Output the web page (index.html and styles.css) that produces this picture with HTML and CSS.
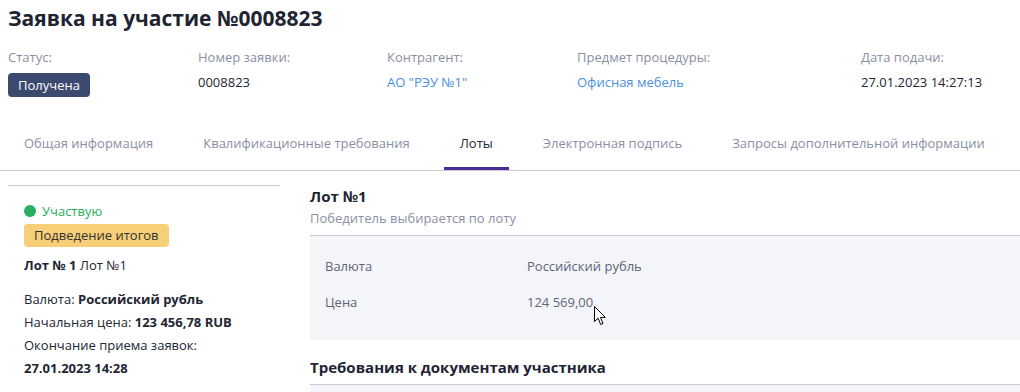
FILE: index.html
```html
<!DOCTYPE html>
<html lang="ru">
<head>
    <meta charset="UTF-8">
    <meta name="viewport" content="width=device-width, initial-scale=1.0">
    <title>Заявка на участие №0008823</title>
    <link rel="stylesheet" href="styles.css">
</head>
<body>

<h1 class="page-title">Заявка на участие №0008823</h1>

<div class="meta">
    <div class="meta-item">
        <div class="meta-label">Статус:</div>
        <div class="meta-value"><span class="status-badge">Получена</span></div>
    </div>
    <div class="meta-item">
        <div class="meta-label">Номер заявки:</div>
        <div class="meta-value">0008823</div>
    </div>
    <div class="meta-item">
        <div class="meta-label">Контрагент:</div>
        <div class="meta-value"><a class="link" href="#">АО "РЭУ №1"</a></div>
    </div>
    <div class="meta-item">
        <div class="meta-label">Предмет процедуры:</div>
        <div class="meta-value"><a class="link" href="#">Офисная мебель</a></div>
    </div>
    <div class="meta-item">
        <div class="meta-label">Дата подачи:</div>
        <div class="meta-value">27.01.2023 14:27:13</div>
    </div>
</div>

<div class="tabs">
    <div class="tab">Общая информация</div>
    <div class="tab">Квалификационные требования</div>
    <div class="tab active">Лоты</div>
    <div class="tab">Электронная подпись</div>
    <div class="tab">Запросы дополнительной информации</div>
</div>

<div class="lots">
    <div class="lot-list">
        <div class="lot-card">
            <div class="participating"><span class="dot"></span>Участвую</div>
            <div class="stage-badge">Подведение итогов</div>
            <div class="lot-name"><b>Лот № 1</b> Лот №1</div>
            <div class="lot-info">Валюта: <b>Российский рубль</b></div>
            <div class="lot-info">Начальная цена: <b>123 456,78 RUB</b></div>
            <div class="lot-info">Окончание приема заявок:</div>
            <div class="lot-info"><b>27.01.2023 14:28</b></div>
        </div>
    </div>

    <div class="lot-detail">
        <h3 class="section-title">Лот №1</h3>
        <div class="section-sub">Победитель выбирается по лоту</div>

        <div class="info-box">
            <div class="info-row">
                <div class="info-label">Валюта</div>
                <div class="info-value">Российский рубль</div>
            </div>
            <div class="info-row">
                <div class="info-label">Цена</div>
                <div class="info-value">124 569,00</div>
            </div>
        </div>

        <h3 class="section-title docs-title">Требования к документам участника</h3>
        <div class="docs-box"></div>
    </div>
</div>

<!-- mouse pointer from the screenshot -->
<svg class="cursor" width="13" height="20" viewBox="0 0 13 20">
    <path d="M0.5 0.5 L0.5 15.5 L4.1 12.2 L6.7 18.5 L9 17.5 L6.5 11.4 L11.3 11.4 Z" fill="#fff" stroke="#000" stroke-width="1" stroke-linejoin="round"/>
</svg>

</body>
</html>
```

FILE: styles.css
```css
body {
    font-family: "Open Sans", "Noto Sans", Arial, sans-serif;
    font-size: 13px;
    color: #222633;
    margin: 0;
    padding: 0 0 0 8px;
    background-color: #fff;
    position: relative;
    overflow: hidden;
}
.page-title {
    font-size: 21px;
    line-height: 28px;
    font-weight: 700;
    margin: 4px 0 0;
    color: #1f2432;
}
.meta {
    display: grid;
    grid-template-columns: 190px 189px 190px 284px 1fr;
    margin-top: 16px;
}
.meta-label {
    color: #8b8fa3;
    line-height: 18px;
}
.meta-value {
    margin-top: 4px;
    height: 24px;
    line-height: 24px;
}
.status-badge {
    display: inline-block;
    vertical-align: -3px;
    background-color: #3d4a6f;
    color: #fff;
    border-radius: 4px;
    padding: 0 10px;
    line-height: 24px;
}
.link {
    color: #4a8fe2;
    text-decoration: none;
}
.tabs {
    display: flex;
    gap: 18px;
    margin: 24px 0 0 -8px;
    padding-left: 8px;
    border-bottom: 1px solid #c8c9d5;
}
.tab {
    padding: 15px 16px 14px;
    line-height: 20px;
    color: #8b8fa3;
    border-bottom: 3px solid transparent;
}
.tab.active {
    color: #222633;
    border-bottom-color: #4a2d96;
}
.lots {
    display: flex;
    gap: 30px;
    margin-top: 14px;
}
.lot-list {
    width: 272px;
    flex-shrink: 0;
    border-top: 1px solid #c8c9d5;
}
.lot-card {
    padding: 15px 16px;
}
.participating {
    display: flex;
    align-items: center;
    gap: 6px;
    color: #27ae60;
    line-height: 20px;
}
.dot {
    width: 12px;
    height: 12px;
    border-radius: 50%;
    background-color: #27ae60;
}
.stage-badge {
    width: fit-content;
    height: 23px;
    margin-top: 3px;
    background-color: #f8cf79;
    color: #333;
    border-radius: 4px;
    padding: 0 10px;
    line-height: 23px;
}
.lot-name {
    margin-top: 7px;
    line-height: 23px;
    margin-bottom: 11px;
}
.lot-info {
    line-height: 23px;
}
.lot-detail {
    flex: 1;
}
.section-title {
    font-size: 15px;
    line-height: 22px;
    font-weight: 700;
    margin: 0;
    color: #1f2432;
}
.section-sub {
    color: #8b8fa3;
    line-height: 20px;
    margin-top: 1px;
}
.info-box {
    margin-top: 7px;
    border-top: 1px solid #c8c9d5;
    background-color: #f4f5f9;
    padding: 12px 15px 20px;
}
.info-row {
    display: grid;
    grid-template-columns: 202px 1fr;
    line-height: 36px;
}
.info-label {
    color: #5f6477;
}
.info-value {
    color: #5f6477;
}
.docs-title {
    margin-top: 16px;
}
.docs-box {
    margin-top: 6px;
    border-top: 1px solid #c8c9d5;
    background-color: #f4f5f9;
    height: 20px;
}
.cursor {
    position: absolute;
    left: 594px;
    top: 306px;
}
```
